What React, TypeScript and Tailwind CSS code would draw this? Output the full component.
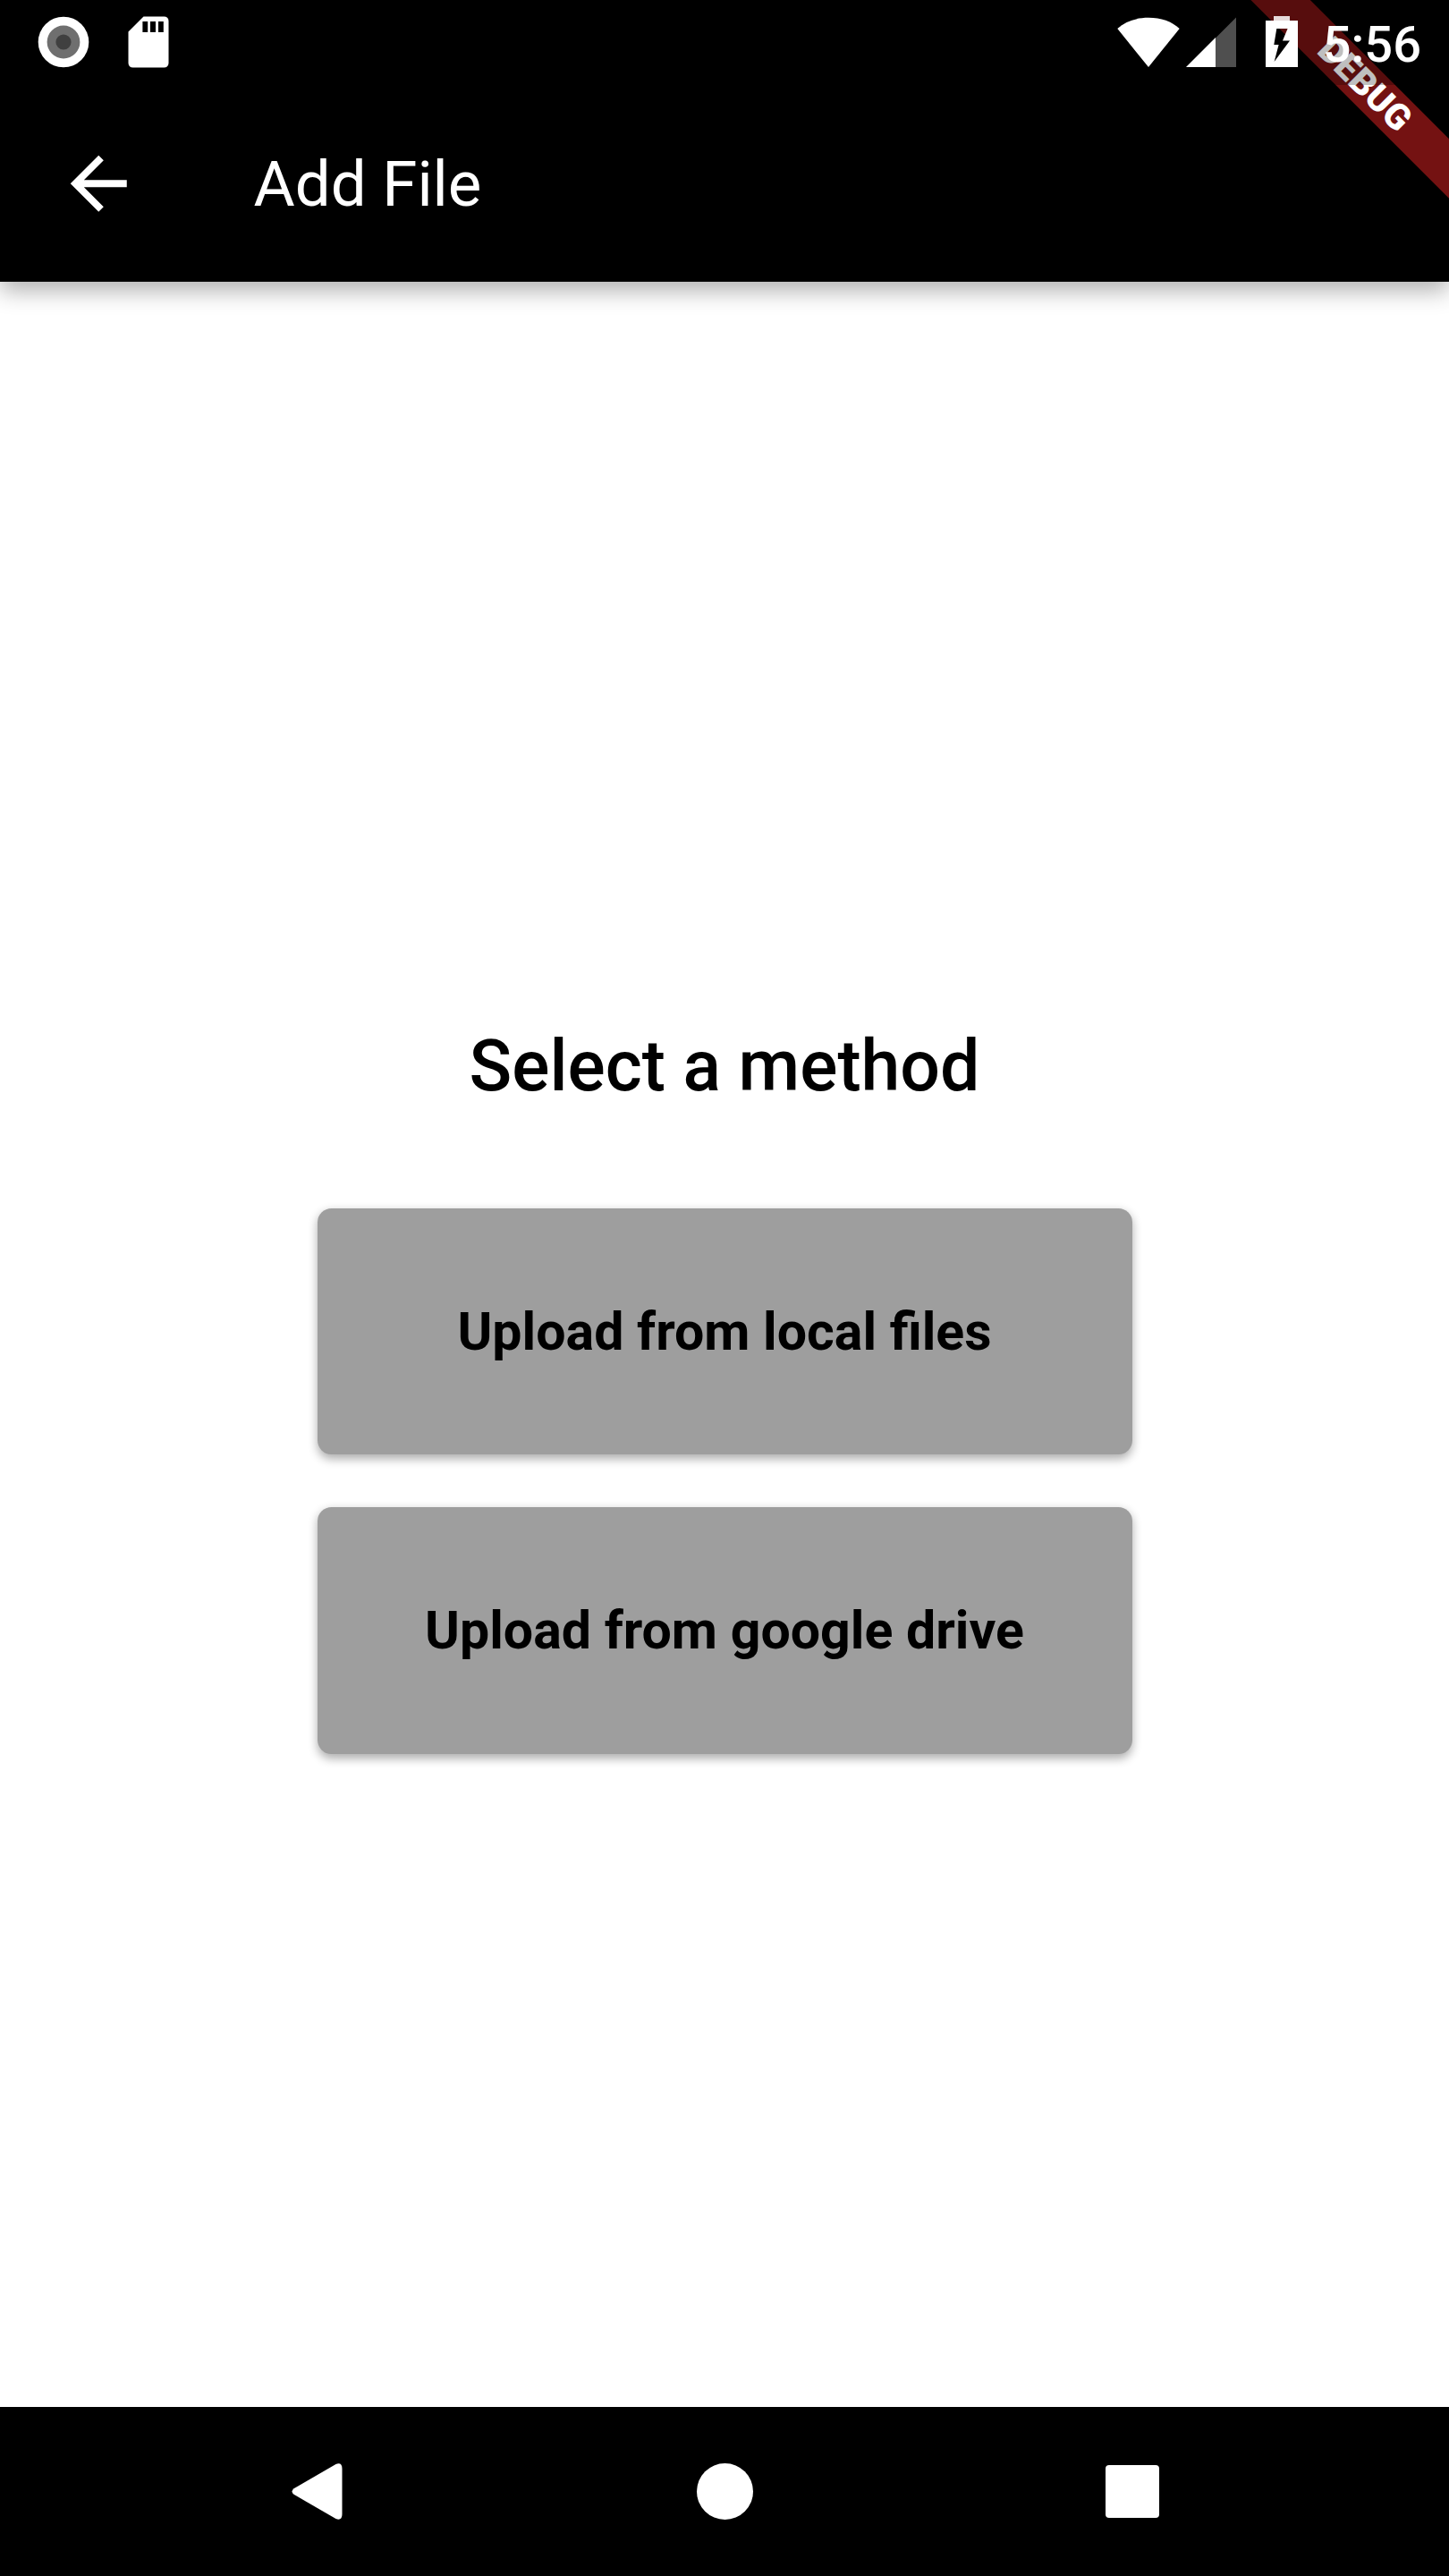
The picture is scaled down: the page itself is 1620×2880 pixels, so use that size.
function CameraIcon() {
  return (
    <svg className="block h-[58px] w-[58px]" viewBox="0 0 58 58">
      <circle cx="29" cy="29" r="28.3" fill="#fff" />
      <circle cx="29" cy="29" r="18.4" fill="#6f6f6f" />
      <circle cx="29" cy="29" r="8.6" fill="#404040" />
    </svg>
  );
}

function SdCardIcon() {
  return (
    <svg className="block h-[58px] w-[46px]" viewBox="0 0 46 58">
      <path
        fill="#fff"
        fillRule="evenodd"
        d="M17.5 .4H40.5A5 5 0 0 1 45.5 5.4V52.6A5 5 0 0 1 40.5 57.6H5.5A5 5 0 0 1 .5 52.6V17.4ZM16.4 6V18H22.2V6ZM25 6V18H31V6ZM34 6V18H39.8V6Z"
      />
    </svg>
  );
}

function WifiIcon() {
  return (
    <svg className="block h-[56px] w-[70px]" viewBox="0 0 70 56">
      <path fill="#fff" d="M35 56L.3 13C9 5 21 .8 35 .8S61 5 69.7 13Z" />
    </svg>
  );
}

function SignalIcon() {
  return (
    <svg className="block h-[56px] w-[56px]" viewBox="0 0 56 56">
      <path fill="#4f4f4f" d="M56 .5V56H.5Z" />
      <path fill="#fff" d="M33 23V56H0Z" />
    </svg>
  );
}

function BatteryIcon() {
  return (
    <svg className="block h-[57px] w-[36px]" viewBox="0 0 36 57">
      <path fill="#fff" fillOpacity=".85" d="M9 0H27V5.5H9Z" />
      <path
        fill="#fff"
        fillRule="evenodd"
        d="M0 5H36V57H0ZM12.3 14L9.3 32H14.6L9.6 51L27 27.5H19L24.6 14Z"
      />
    </svg>
  );
}

function DebugBanner() {
  return (
    <div className="absolute top-[110.25px] left-[1462.5px] flex h-[47.25px] w-[315px] origin-[157.5px_-110.25px] rotate-45 items-center justify-center bg-[#b71c1c]/63 text-[40.16px] leading-none font-black text-white">
      DEBUG
    </div>
  );
}

function MethodButton({ label }: { label: string }) {
  return (
    <button className="flex h-[275.6px] w-[911px] items-center justify-center rounded-[15.75px] bg-[#9e9e9e] text-[59.06px] leading-none font-bold text-black shadow-[0_4.5px_11px_rgba(0,0,0,0.33)]">
      {label}
    </button>
  );
}

export default function App() {
  return (
    <div className="relative flex h-[2880px] w-[1620px] flex-col overflow-hidden bg-white font-['Roboto',sans-serif]">
      <header className="relative h-[315px] shrink-0 bg-black text-white shadow-[0_10px_24px_rgba(0,0,0,0.31)]">
        <div className="absolute inset-x-0 top-0 h-[315px] overflow-hidden">
          <DebugBanner />
        </div>
        <div className="relative flex h-[94.5px] items-start bg-black/25">
          <div className="flex gap-[42.7px] pt-[18px] pl-[42.3px]">
            <CameraIcon />
            <SdCardIcon />
          </div>
          <div className="ml-auto flex pr-[31px]">
            <div className="pt-[19px]">
              <WifiIcon />
            </div>
            <div className="ml-[7px] pt-[19px]">
              <SignalIcon />
            </div>
            <div className="ml-[33px] pt-[18px]">
              <BatteryIcon />
            </div>
            <div className="ml-[28px] pt-[22px] text-[56px] leading-[56px] font-medium">5:56</div>
          </div>
        </div>
        <div className="flex h-[220.5px] items-center pl-[63px]">
          <svg className="block h-[94.5px] w-[94.5px]" viewBox="0 0 24 24">
            <path fill="#fff" d="M20 11H7.83l5.59-5.59L12 4l-8 8 8 8 1.41-1.41L7.83 13H20v-2z" />
          </svg>
          <h1 className="ml-[126px] pt-[3px] text-[70.88px] leading-none font-normal">Add File</h1>
        </div>
      </header>

      <main className="flex flex-1 flex-col items-center pt-[831px]">
        <h2 className="text-[78.75px] leading-[92px] font-medium text-black">Select a method</h2>
        <div className="mt-[112.5px] flex flex-col gap-[59.06px]">
          <MethodButton label="Upload from local files" />
          <MethodButton label="Upload from google drive" />
        </div>
      </main>

      <nav className="flex h-[189px] shrink-0 items-center bg-black">
        <svg className="ml-[326px] block h-[63px] w-[57px]" viewBox="0 0 57 63">
          <path
            fill="#fff"
            d="M2.5 28.2L49.5 .9Q56.5 -1.5 56.5 6V57Q56.5 64.5 49.5 62.1L2.5 34.8Q-1.5 31.5 2.5 28.2Z"
          />
        </svg>
        <div className="ml-[395.5px] h-[63px] w-[63px] rounded-full bg-white" />
        <div className="ml-[394.7px] h-[59.5px] w-[59.5px] rounded-[4px] bg-white" />
      </nav>
    </div>
  );
}
